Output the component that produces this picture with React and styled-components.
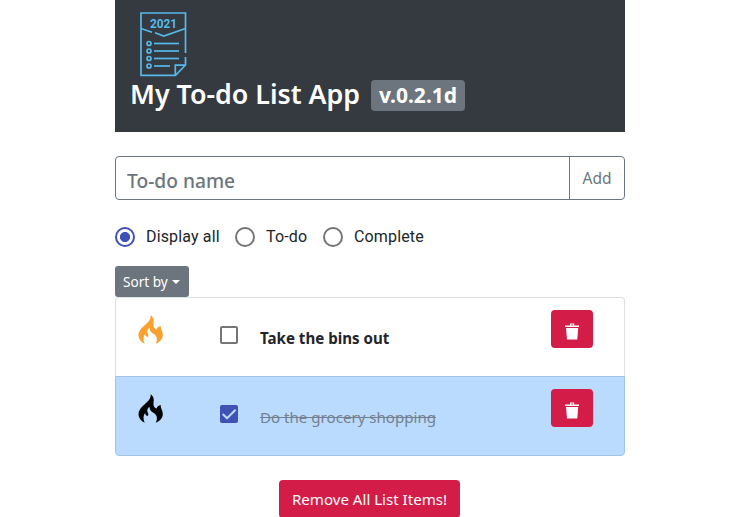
import React, { useState } from "react";
import styled, { createGlobalStyle } from "styled-components";

const GlobalStyle = createGlobalStyle`
  *, *::before, *::after { box-sizing: border-box; }
  html, body { margin: 0; height: 517px; overflow: hidden; background: #fff; }
  body { font-family: "Noto Sans", sans-serif; font-size: 16px; line-height: 24px; color: #212529; }
  button, input { font-family: inherit; margin: 0; }
`;

const Page = styled.main`
  width: 510px;
  margin-left: 115px;
  display: flex;
  flex-direction: column;
`;

const Header = styled.header`
  height: 132px;
  padding: 11px 16px 0;
  background: #343a40;
  color: #fff;
`;

const Logo = styled.svg`
  display: block;
  width: 48px;
  height: 66px;
  margin-left: 8px;
`;

const TitleRow = styled.div`
  display: flex;
  align-items: center;
  gap: 8px;
  height: 34px;
`;

const Title = styled.h1`
  margin: 0 0 0 -1px;
  width: 233px;
  white-space: nowrap;
  font-size: 26.8px;
  font-weight: 600;
  line-height: 34px;
`;

const Version = styled.span`
  display: flex;
  align-items: center;
  justify-content: center;
  width: 94px;
  height: 31px;
  margin-top: 3px;
  border-radius: 4px;
  background: #6c757d;
  font-size: 21px;
  font-weight: 700;
  line-height: 31px;
`;

const AddForm = styled.form`
  display: flex;
  height: 44px;
  margin-top: 24px;
  border: 1px solid #6c757d;
  border-radius: 4px;
`;

const NameInput = styled.input`
  flex: 1;
  min-width: 0;
  border: 0;
  outline: 0;
  padding: 4px 12px 0 11px;
  background: transparent;
  font-size: 19.2px;
  font-weight: 500;
  color: #495057;
  &::placeholder { color: #6c757d; opacity: 1; }
`;

const AddButton = styled.button`
  width: 55px;
  padding: 0;
  border: 0;
  border-left: 1px solid #6c757d;
  background: transparent;
  color: #6c757d;
  font-size: 15.5px;
`;

const Filters = styled.div`
  display: flex;
  height: 20px;
  margin-top: 27px;
`;

const FilterOption = styled.label`
  display: flex;
  align-items: center;
  gap: 11px;
  width: ${(p) => p.$width}px;
  white-space: nowrap;
  font-family: Roboto, sans-serif;
  font-size: 16px;
  letter-spacing: 0.15px;
  color: #212529;
`;

const Radio = styled.input`
  appearance: none;
  flex: none;
  width: 20px;
  height: 20px;
  border: 2px solid #757575;
  border-radius: 50%;
  &:checked {
    border-color: #3f51b5;
    background: radial-gradient(circle, #3f51b5 4.7px, transparent 5.4px);
  }
`;

const SortButton = styled.button`
  display: flex;
  align-items: center;
  gap: 4px;
  width: 74px;
  height: 31px;
  margin-top: 19px;
  padding: 0 0 0 8px;
  border: 0;
  border-radius: 3px;
  background: #6c757d;
  color: #fff;
  font-size: 13.6px;
  white-space: nowrap;
`;

const Caret = styled.span`
  border-top: 4.5px solid #fff;
  border-left: 4.5px solid transparent;
  border-right: 4.5px solid transparent;
`;

const List = styled.ul`
  margin: 0;
  padding: 0;
  list-style: none;
`;

const Item = styled.li`
  display: grid;
  grid-template-columns: 81px 40px 291px 42px;
  align-items: start;
  height: 80px;
  padding: 12px 0 0 23px;
  border: 1px solid ${(p) => (p.$done ? "#a3c5e3" : "#dfdfdf")};
  background: ${(p) => (p.$done ? "#badbfe" : "#fff")};
  &:first-child { border-radius: 4px 4px 0 0; border-bottom: 0; height: 79px; }
  &:last-child { border-radius: 0 0 4px 4px; }
`;

const Flame = styled.svg`
  display: block;
  width: 25px;
  height: 29px;
  margin: 5px 0 0 -1px;
  fill: ${(p) => p.$color};
`;

const Check = styled.button`
  display: block;
  width: 18px;
  height: 18px;
  margin-top: 16px;
  padding: 0;
  border: ${(p) => (p.$on ? "0" : "2px solid #757575")};
  border-radius: 2px;
  background: ${(p) => (p.$on ? "#3f51b5" : "transparent")};
  svg { display: block; }
`;

const ItemText = styled.span`
  margin-top: 16px;
  white-space: nowrap;
  font-size: 15.1px;
  font-weight: ${(p) => (p.$done ? 400 : 700)};
  color: ${(p) => (p.$done ? "#75828e" : "#212529")};
  text-decoration: ${(p) => (p.$done ? "line-through" : "none")};
`;

const DeleteButton = styled.button`
  display: flex;
  align-items: center;
  justify-content: center;
  width: 42px;
  height: 38px;
  padding: 5px 0 0;
  border: 0;
  border-radius: 4px;
  background: #d41c48;
`;

const RemoveAll = styled.button`
  align-self: center;
  width: 181px;
  height: 38px;
  margin: 24px 0 0 -1px;
  padding: 0;
  border: 0;
  border-radius: 4px;
  background: #d41c48;
  color: #fff;
  font-size: 15.1px;
  white-space: nowrap;
`;

const YearText = styled.text`
  font-family: Roboto, sans-serif;
  font-size: 12.5px;
  font-weight: 700;
  fill: #56b9ea;
`;

function ListLogo() {
  return (
    <Logo viewBox="0 0 48 66" fill="none" stroke="#56b9ea" strokeWidth="1.7">
      <path d="M46.5 42V2H2V64.3H36.5L46.5 54V46" />
      <path d="M36.3 64V54.2H46.5" />
      <path d="M2 17.5L13 21.3M16 21.8L24.8 25L46.5 17.5" />
      {[32.5, 40, 47.5, 55].map((y) => (
        <g key={y}>
          <circle cx="10" cy={y} r="2" />
          <path d={`M15 ${y}H${y === 55 ? 31 : 40}`} />
        </g>
      ))}
      <YearText x="11" y="16.5" textLength="27" lengthAdjust="spacingAndGlyphs" stroke="none">
        2021
      </YearText>
    </Logo>
  );
}

function FlameIcon({ color }) {
  return (
    <Flame $color={color} viewBox="0 0 25 29">
      <path d="M12.6 .3C13.2 4.2 10.5 7 6.7 10.2C2.6 13.6 .4 16.7 .5 20.4C.6 24 3 26.9 6.7 28.7C5 25 5.1 21.7 7.2 18.8C7.3 20.8 8 21.9 9.3 21.8C11.2 21.6 10 19.3 9.4 17.5C8.9 15.6 9.7 13.9 11.6 12.7C11.5 16.2 13.3 17.3 15.5 18.7C19.2 21 19.8 24.6 17.8 28.7C22 27 24.8 23.8 24.8 19.7C24.8 16 22.3 14.4 22.8 10.9C20.3 11.2 18.9 12.4 18.8 14.6C16.7 14 15.3 12.3 15.5 10C15.6 6.3 16.7 3.2 12.6 .3Z" />
    </Flame>
  );
}

function TrashIcon() {
  return (
    <svg width="16" height="18" viewBox="0 0 16 18" fill="#fff">
      <path fillRule="evenodd" d="M1 4V2.5H6V.5H10.2V2.5H15V4ZM7.2 1.5V2.5H9V1.5Z" />
      <path d="M2 5H14.2L13.3 16.5H3Z" />
    </svg>
  );
}

const filters = [
  { label: "Display all", width: 120 },
  { label: "To-do", width: 88 },
  { label: "Complete", width: 110 },
];

export default function App() {
  const [filter, setFilter] = useState("Display all");
  const [items, setItems] = useState([
    { text: "Take the bins out", done: false, flame: "#f9a02d" },
    { text: "Do the grocery shopping", done: true, flame: "#000" },
  ]);
  const toggle = (text) =>
    setItems(items.map((i) => (i.text === text ? { ...i, done: !i.done } : i)));
  const visible = items.filter(
    (i) => filter === "Display all" || i.done === (filter === "Complete")
  );

  return (
    <>
      <GlobalStyle />
      <Page>
        <Header>
          <ListLogo />
          <TitleRow>
            <Title>My To-do List App</Title>
            <Version>v.0.2.1d</Version>
          </TitleRow>
        </Header>
        <AddForm onSubmit={(e) => e.preventDefault()}>
          <NameInput placeholder="To-do name" />
          <AddButton>Add</AddButton>
        </AddForm>
        <Filters>
          {filters.map(({ label, width }) => (
            <FilterOption key={label} $width={width}>
              <Radio
                type="radio"
                name="filter"
                checked={filter === label}
                onChange={() => setFilter(label)}
              />
              {label}
            </FilterOption>
          ))}
        </Filters>
        <SortButton>
          Sort by
          <Caret />
        </SortButton>
        <List>
          {visible.map((item) => (
            <Item key={item.text} $done={item.done}>
              <FlameIcon color={item.flame} />
              <Check $on={item.done} onClick={() => toggle(item.text)}>
                {item.done && (
                  <svg width="18" height="18" fill="none" stroke="#badbfe" strokeWidth="2">
                    <path d="M2.7 9L7 13.3L15.6 4.7" />
                  </svg>
                )}
              </Check>
              <ItemText $done={item.done}>{item.text}</ItemText>
              <DeleteButton onClick={() => setItems(items.filter((i) => i !== item))}>
                <TrashIcon />
              </DeleteButton>
            </Item>
          ))}
        </List>
        <RemoveAll onClick={() => setItems([])}>Remove All List Items!</RemoveAll>
      </Page>
    </>
  );
}
